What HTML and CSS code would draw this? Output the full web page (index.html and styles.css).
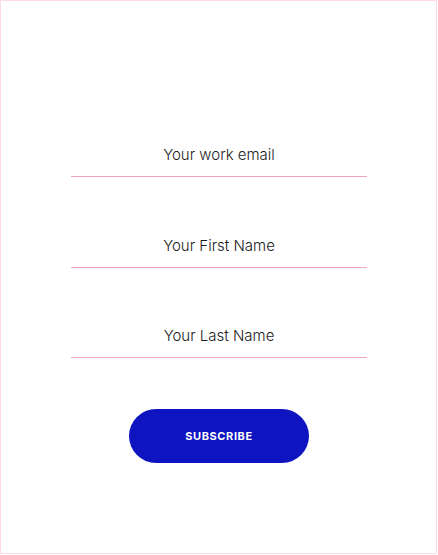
FILE: index.html
```html
<!DOCTYPE html>
<html lang="en">
<head>
<meta charset="utf-8">
<link rel="stylesheet" href="styles.css">
</head>
<body>
<div class="frame">
  <form class="form">
    <input class="field" type="email" placeholder="Your work email">
    <input class="field" type="text" placeholder="Your First Name">
    <input class="field" type="text" placeholder="Your Last Name">
    <button class="btn" type="button">Subscribe</button>
  </form>
</div>
</body>
</html>
```
FILE: styles.css
```css
html, body {
  margin: 0;
  padding: 0;
  background: #fff;
}
.frame {
  box-sizing: border-box;
  width: 437px;
  height: 554px;
  border: 1px solid #ffd9e6;
  padding-top: 134px;
}
.form {
  width: 296px;
  margin: 0 0 0 70px;
  display: flex;
  flex-direction: column;
  align-items: center;
}
.field {
  box-sizing: border-box;
  width: 296px;
  height: 42px;
  margin: 0 0 49px;
  padding: 0 0 3px;
  border: 0;
  border-bottom: 1px solid #f2a3bb;
  background: transparent;
  font-family: Inter, "Noto Sans", sans-serif;
  font-weight: 300;
  font-size: 15px;
  line-height: 20px;
  color: #1a1a1a;
  text-align: center;
  outline: none;
}
.field:nth-of-type(2) { margin-bottom: 48px; }
.field:nth-of-type(3) { margin-bottom: 51px; }
.field::placeholder {
  color: #1a1a1a;
  opacity: 1;
}
.btn {
  width: 180px;
  height: 54px;
  border: 0;
  border-radius: 27px;
  background: #0e14bf;
  color: #fff;
  font-family: Inter, "Noto Sans", sans-serif;
  font-weight: 700;
  font-size: 11px;
  letter-spacing: 0.6px;
  text-transform: uppercase;
  cursor: pointer;
}
```
